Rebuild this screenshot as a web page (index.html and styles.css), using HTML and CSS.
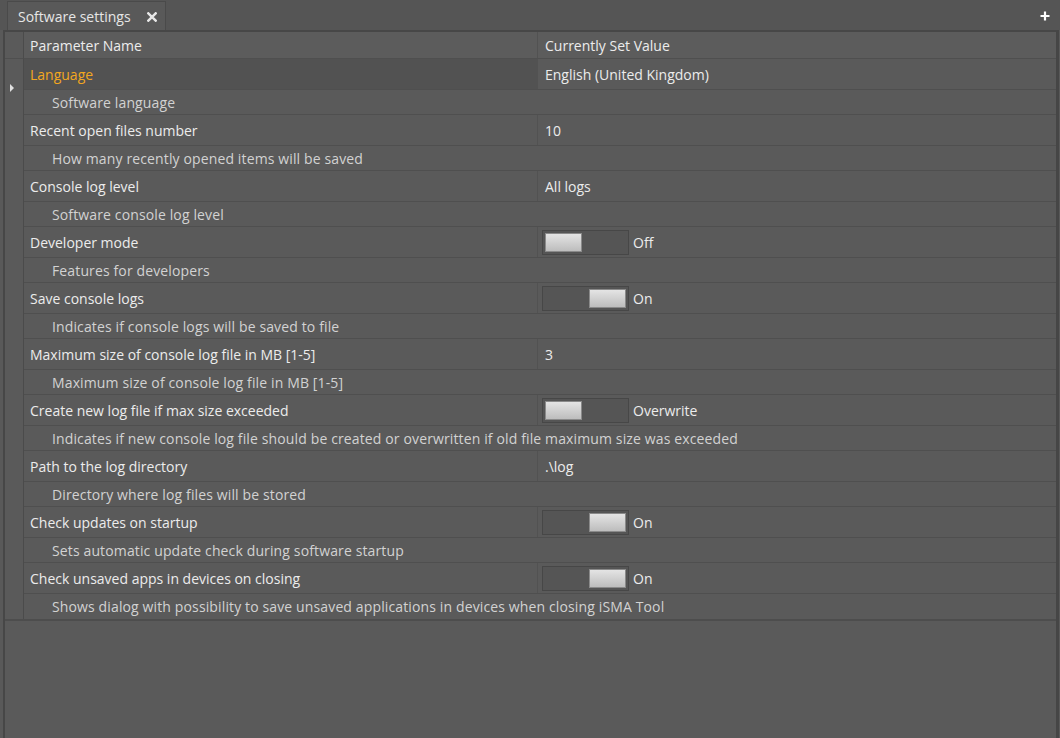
FILE: index.html
```html
<!DOCTYPE html>
<html>
<head>
<meta charset="utf-8">
<link rel="stylesheet" href="styles.css">
</head>
<body>
<div class="app">
  <div class="tabbar">
    <div class="tab">
      <span class="tab-title">Software settings</span>
      <svg class="close" width="10" height="10" viewBox="0 0 10 10"><path d="M1.3 1.3 L8.7 8.7 M8.7 1.3 L1.3 8.7" stroke="#e8e8e8" stroke-width="2.4" stroke-linecap="square"/></svg>
    </div>
    <svg class="plus" width="10" height="10" viewBox="0 0 10 10"><path d="M5 0.5 V9.5 M0.5 5 H9.5" stroke="#ffffff" stroke-width="2.2"/></svg>
  </div>
  <div class="panel">
    <div class="grid">
      <div class="group head">
        <div class="gutter"></div>
        <div class="cells">
          <div class="main">
            <div class="name">Parameter Name</div>
            <div class="value">Currently Set Value</div>
          </div>
        </div>
      </div>

      <div class="group selected">
        <div class="gutter"><span class="arrow"></span></div>
        <div class="cells">
          <div class="main">
            <div class="name accent">Language</div>
            <div class="value">English (United Kingdom)</div>
          </div>
          <div class="desc">Software language</div>
        </div>
      </div>

      <div class="group">
        <div class="gutter"></div>
        <div class="cells">
          <div class="main">
            <div class="name">Recent open files number</div>
            <div class="value">10</div>
          </div>
          <div class="desc">How many recently opened items will be saved</div>
        </div>
      </div>

      <div class="group">
        <div class="gutter"></div>
        <div class="cells">
          <div class="main">
            <div class="name">Console log level</div>
            <div class="value">All logs</div>
          </div>
          <div class="desc">Software console log level</div>
        </div>
      </div>

      <div class="group">
        <div class="gutter"></div>
        <div class="cells">
          <div class="main">
            <div class="name">Developer mode</div>
            <div class="value toggle-cell"><span class="toggle"><span class="knob"></span></span><span class="tlabel">Off</span></div>
          </div>
          <div class="desc">Features for developers</div>
        </div>
      </div>

      <div class="group">
        <div class="gutter"></div>
        <div class="cells">
          <div class="main">
            <div class="name">Save console logs</div>
            <div class="value toggle-cell"><span class="toggle on"><span class="knob"></span></span><span class="tlabel">On</span></div>
          </div>
          <div class="desc">Indicates if console logs will be saved to file</div>
        </div>
      </div>

      <div class="group">
        <div class="gutter"></div>
        <div class="cells">
          <div class="main">
            <div class="name">Maximum size of console log file in MB [1-5]</div>
            <div class="value">3</div>
          </div>
          <div class="desc">Maximum size of console log file in MB [1-5]</div>
        </div>
      </div>

      <div class="group">
        <div class="gutter"></div>
        <div class="cells">
          <div class="main">
            <div class="name">Create new log file if max size exceeded</div>
            <div class="value toggle-cell"><span class="toggle"><span class="knob"></span></span><span class="tlabel">Overwrite</span></div>
          </div>
          <div class="desc">Indicates if new console log file should be created or overwritten if old file maximum size was exceeded</div>
        </div>
      </div>

      <div class="group">
        <div class="gutter"></div>
        <div class="cells">
          <div class="main">
            <div class="name">Path to the log directory</div>
            <div class="value">.\log</div>
          </div>
          <div class="desc">Directory where log files will be stored</div>
        </div>
      </div>

      <div class="group">
        <div class="gutter"></div>
        <div class="cells">
          <div class="main">
            <div class="name">Check updates on startup</div>
            <div class="value toggle-cell"><span class="toggle on"><span class="knob"></span></span><span class="tlabel">On</span></div>
          </div>
          <div class="desc">Sets automatic update check during software startup</div>
        </div>
      </div>

      <div class="group last">
        <div class="gutter"></div>
        <div class="cells">
          <div class="main">
            <div class="name">Check unsaved apps in devices on closing</div>
            <div class="value toggle-cell"><span class="toggle on"><span class="knob"></span></span><span class="tlabel">On</span></div>
          </div>
          <div class="desc">Shows dialog with possibility to save unsaved applications in devices when closing iSMA Tool</div>
        </div>
      </div>
    </div>
  </div>
</div>
</body>
</html>
```

FILE: styles.css
```css
* { box-sizing: border-box; }
html, body {
  margin: 0;
  padding: 0;
  background: #595959;
}
body {
  font-family: "Open Sans", "Noto Sans", "Liberation Sans", sans-serif;
  font-size: 14px;
  color: #ececec;
}
.app {
  width: 1060px;
  height: 738px;
  display: flex;
  flex-direction: column;
  background: #595959;
}
.tabbar {
  height: 30px;
  flex: none;
  display: flex;
  align-items: flex-start;
  justify-content: space-between;
  background: #555555;
  padding: 1px 10px 0 7px;
}
.tab {
  height: 29px;
  width: 159px;
  display: flex;
  align-items: center;
  gap: 16px;
  padding-left: 10px;
  background: #595959;
  border: 1px solid #4a4a4a;
  border-bottom: none;
}
.tab-title { color: #e6e6e6; }
.close { margin-top: 1px; }
.plus { margin-top: 10px; }
.panel {
  flex: 1;
  margin: 0 1px 0 3px;
  border-top: 2px solid #474747;
  border-left: 2px solid #474747;
  border-right: 3px solid #464646;
  background: #5a5a5a;
}
.grid {
  display: flex;
  flex-direction: column;
  border-bottom: 2px solid #4d4d4d;
}
.group {
  display: flex;
}
.gutter {
  width: 19px;
  flex: none;
  border-right: 1px solid #4b4b4b;
  display: flex;
  align-items: center;
  justify-content: center;
  padding-right: 4px;
  padding-top: 2px;
}
.head .gutter { border-bottom: 1px solid #4f4f4f; }
.arrow {
  width: 0;
  height: 0;
  border-top: 4px solid transparent;
  border-bottom: 4px solid transparent;
  border-left: 4px solid #e0e0e0;
}
.cells {
  flex: 1;
  display: flex;
  flex-direction: column;
}
.main {
  height: 31px;
  display: flex;
  border-bottom: 1px solid #4f4f4f;
}
.head .main {
  height: 27px;
  background: #5c5c5c;
}
.name {
  width: 514px;
  flex: none;
  padding-left: 6px;
  display: flex;
  align-items: center;
  border-right: 1px solid #525252;
  white-space: nowrap;
}
.value {
  flex: 1;
  padding-left: 7px;
  display: flex;
  align-items: center;
  white-space: nowrap;
}
.selected .name { background: #525252; }
.accent { color: #f2a71f; }
.desc {
  height: 25px;
  padding-left: 28px;
  display: flex;
  align-items: center;
  color: #d2d2d2;
  letter-spacing: 0.13px;
  border-bottom: 1px solid #4f4f4f;
  white-space: nowrap;
}
.last .desc { border-bottom: none; }
.toggle-cell { padding-left: 4px; gap: 4px; }
.toggle {
  width: 87px;
  height: 25px;
  border: 1px solid #474747;
  background: #555555;
  display: flex;
  align-items: center;
  padding: 0 2px;
}
.toggle.on { justify-content: flex-end; }
.knob {
  width: 37px;
  height: 19px;
  background: linear-gradient(#e4e4e4, #bdbdbd);
  border: 1px solid #8a8a8a;
}
.tlabel { color: #ececec; }
```
